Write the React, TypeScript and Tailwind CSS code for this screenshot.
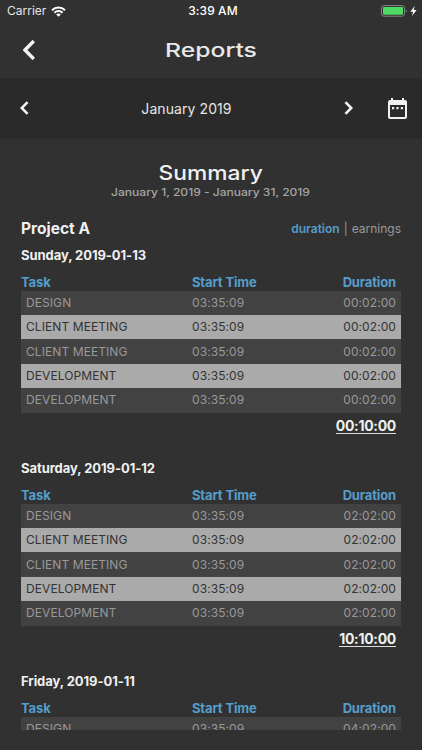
import { useState } from "react";
import clsx from "clsx";

type Entry = { task: string; start: string; duration: string };
type Day = { label: string; entries: Entry[]; total: string };
type Mode = "duration" | "earnings";

const tasks = ["DESIGN", "CLIENT MEETING", "CLIENT MEETING", "DEVELOPMENT", "DEVELOPMENT"];

const makeEntries = (duration: string): Entry[] =>
	tasks.map((task) => ({ task, start: "03:35:09", duration }));

const days: Day[] = [
	{ label: "Sunday, 2019-01-13", entries: makeEntries("00:02:00"), total: "00:10:00" },
	{ label: "Saturday, 2019-01-12", entries: makeEntries("02:02:00"), total: "10:10:00" },
	{ label: "Friday, 2019-01-11", entries: makeEntries("04:02:00").slice(0, 1), total: "" },
];

const WifiIcon = () => (
	<svg className="w-[15px] h-[11px]" viewBox="0 0 15 11" fill="none" stroke="#fff" strokeWidth="2">
		<path d="M1 4.2C4.7.7 10.3.7 14 4.2" />
		<path d="M3.4 6.7c2.3-2.2 5.9-2.2 8.2 0" />
		<path d="M7.5 10.7 5.2 8.4c1.3-1.2 3.3-1.2 4.6 0z" fill="#fff" stroke="none" />
	</svg>
);

const BatteryIcon = () => (
	<svg className="w-[37px] h-3" viewBox="0 0 37 12">
		<rect x=".5" y=".6" width="23" height="10.6" rx="2.4" fill="none" stroke="#858585" />
		<rect x="2" y="2.1" width="20" height="7.6" rx="1" fill="#4cd964" />
		<path d="M24.7 4.2c1.4.4 1.4 3 0 3.4z" fill="#858585" />
		<path d="M33.7.9 29.3 6.7h2.8l-1.1 4.4 4.6-6h-2.9z" fill="#fff" />
	</svg>
);

const Chevron = ({ className, d, width }: { className: string; d: string; width: number }) => (
	<svg className={className} viewBox="0 0 12 20" fill="none" stroke="#f2f2f2" strokeWidth={width}>
		<path d={d} />
	</svg>
);

const CalendarIcon = () => (
	<svg className="w-[19px] h-[21px]" viewBox="0 0 19 21" fill="#f0f0f0">
		<path
			fillRule="evenodd"
			d="M3 0h2v2h9V0h2v2h1a2 2 0 0 1 2 2v15a2 2 0 0 1-2 2H2a2 2 0 0 1-2-2V4a2 2 0 0 1 2-2h1zM2 7v12h15V7z"
		/>
		<path d="M4 9h2.2v2.2H4zM8.4 9h2.2v2.2H8.4zM12.8 9H15v2.2h-2.2z" />
	</svg>
);

const StatusBar = () => (
	<div className="grid grid-cols-3 items-center h-[22px] pl-[7px] pr-1 text-[12px] text-white">
		<div className="flex items-center gap-[5px]">
			<span className="text-[#e6e6e6]">Carrier</span>
			<WifiIcon />
		</div>
		<span className="pl-px text-center font-medium tracking-[0.08px]">3:39 AM</span>
		<div className="flex justify-end">
			<BatteryIcon />
		</div>
	</div>
);

const DayTable = ({ day }: { day: Day }) => (
	<section className="h-[213px]">
		<h3 className="h-[27.2px] text-[13px] leading-[18px] font-bold tracking-[-0.06px] text-[#f0f0f0]">
			{day.label}
		</h3>
		<div className="grid grid-cols-[171px_1fr_auto] pr-[5px] h-[18px] text-[13px] leading-[18px] font-bold tracking-[-0.14px] text-[#559dcb]">
			<span>Task</span>
			<span>Start Time</span>
			<span>Duration</span>
		</div>
		{day.entries.map((entry, i) => (
			<div
				key={i}
				className={clsx(
					"grid grid-cols-[166px_1fr_auto] items-center h-[24.4px] px-[5px] text-[12px] tracking-[0.08px]",
					i % 2 ? "bg-[#aaaaaa] text-[#333333]" : "bg-[#424242] text-[#999999]",
				)}
			>
				<span>{entry.task}</span>
				<span>{entry.start}</span>
				<span>{entry.duration}</span>
			</div>
		))}
		{day.total && (
			<div className="flex justify-end pr-[5px] pt-[5.5px]">
				<span className="border-b border-[#dddddd] text-[14px] leading-[15px] font-bold tracking-[-0.3px] text-[#f0f0f0]">
					{day.total}
				</span>
			</div>
		)}
	</section>
);

export default function App() {
	const [mode, setMode] = useState<Mode>("duration");

	return (
		<div className="flex flex-col w-[422px] h-[750px] overflow-hidden bg-[#313131] font-['Inter',sans-serif]">
			<StatusBar />
			<header className="grid grid-cols-[60px_1fr_60px] items-center h-14 shrink-0">
				<button type="button" aria-label="Back" className="pl-[23px]">
					<Chevron className="w-3 h-5" d="M10.8 1 2 10l8.8 9" width={3.4} />
				</button>
				<h1 className="scale-x-[1.3] pt-0.5 text-center text-[19px] font-medium text-[#e8e8e8]">Reports</h1>
			</header>
			<nav className="grid grid-cols-[60px_1fr_60px_49px] items-center h-[60.5px] shrink-0 bg-[#2a2a2a]">
				<button type="button" aria-label="Previous month" className="pl-5">
					<Chevron className="w-[9px] h-3.5" d="M10.4 1.5 2 10l8.4 8.5" width={3.6} />
				</button>
				<span className="text-center text-[14px] tracking-[0.08px] text-[#e6e6e6]">January 2019</span>
				<button type="button" aria-label="Next month" className="pl-[31px]">
					<Chevron className="w-[9px] h-3.5" d="M1.6 1.5 10 10l-8.4 8.5" width={3.6} />
				</button>
				<button type="button" aria-label="Pick a date" className="pl-[15px]">
					<CalendarIcon />
				</button>
			</nav>
			<main className="h-[591px] shrink-0 overflow-hidden px-[21px] pt-[21px]">
				<div className="flex flex-col items-center h-[58px]">
					<h2 className="scale-x-[1.14] text-[20px] leading-[26px] font-medium text-[#f0f0f0]">Summary</h2>
					<p className="scale-x-[1.205] text-[10px] leading-[12px] font-medium text-[#a6a6a6]">
						January 1, 2019 - January 31, 2019
					</p>
				</div>
				<div className="flex items-center justify-between h-7 pb-1.5">
					<h2 className="text-[15.5px] font-bold text-[#f0f0f0]">Project A</h2>
					<div className="flex gap-1 text-[12px] text-[#999999]">
						<button
							type="button"
							className={clsx(mode === "duration" && "font-semibold text-[#559dcb]")}
							onClick={() => setMode("duration")}
						>
							duration
						</button>
						<span>|</span>
						<button
							type="button"
							className={clsx(mode === "earnings" && "font-semibold text-[#559dcb]")}
							onClick={() => setMode("earnings")}
						>
							earnings
						</button>
					</div>
				</div>
				{days.map((day) => (
					<DayTable key={day.label} day={day} />
				))}
			</main>
		</div>
	);
}
